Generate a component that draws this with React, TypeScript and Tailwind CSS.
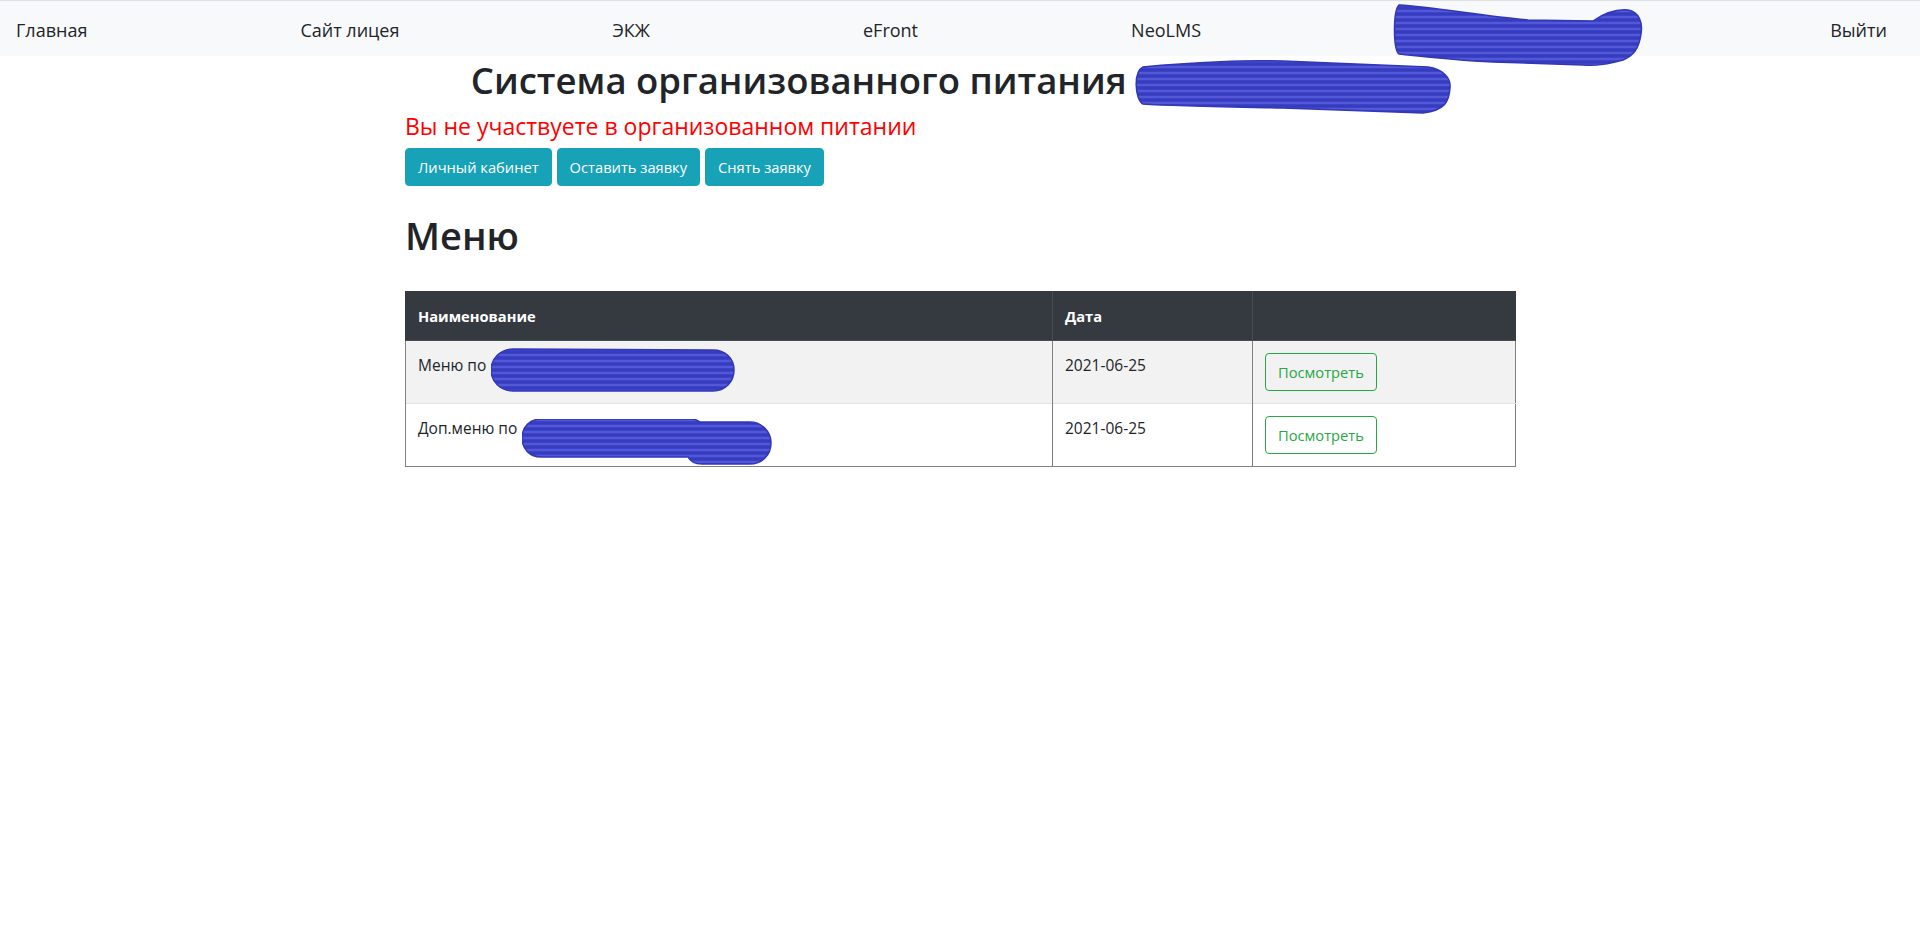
import React from "react";

function Texture({ id, w, h }: { id: string; w: number; h: number }) {
  const lines: React.ReactNode[] = [];
  for (let y = 1; y < h; y += 3) {
    lines.push(
      <path
        key={y}
        d={`M0,${y} Q${w * 0.25},${y + ((y * 7) % 3) - 1} ${w * 0.5},${y} T${w},${y}`}
        stroke={y % 2 ? "#7a82ee" : "#2b31a8"}
        strokeWidth={1}
        fill="none"
        opacity={0.7}
      />
    );
  }
  return <g clipPath={`url(#${id})`}>{lines}</g>;
}

function Scribble({ id, w, h, d, className }: { id: string; w: number; h: number; d: string; className: string }) {
  return (
    <svg width={w} height={h} viewBox={`0 0 ${w} ${h}`} className={className} aria-hidden="true">
      <defs>
        <clipPath id={id}>
          <path d={d} />
        </clipPath>
      </defs>
      <path d={d} fill="#3d43c9" />
      <Texture id={id} w={w} h={h} />
      <path d={d} fill="none" stroke="#3237b8" strokeWidth={1.5} />
    </svg>
  );
}

const navScribble =
  "M6,1 C40,3 90,12 135,16 L200,17 C210,10 222,5 235,6 C246,8 250,18 248,30 C246,45 240,52 230,56 C215,60 205,62 190,61 L100,58 C60,56 25,52 6,50 C0,45 0,7 6,1 Z";
const titleScribble =
  "M10,7 C60,2 120,0 150,1 L295,7 C310,9 318,18 317,28 C316,42 312,50 290,53 L150,48 C100,47 40,46 10,44 C2,40 0,12 10,7 Z";
const row1Scribble =
  "M22,1 L222,2 C234,2 243,10 243,22 C243,34 234,43 222,43 L22,43 C10,43 0,34 0,22 C0,10 10,1 22,1 Z";
const row2Scribble =
  "M19,0 L170,0 C174,0 176,2 178,3 L228,3 C240,3 249,13 249,24 C249,36 240,45 228,45 L180,45 C172,45 168,42 166,38 L19,38 C8,38 0,30 0,19 C0,8 8,0 19,0 Z";

const navItems = ["Главная", "Сайт лицея", "ЭКЖ", "eFront", "NeoLMS"];

const thBase = "px-3 py-3 text-left text-[14.7px] leading-6 font-bold border border-[#454d55] border-t-[#343a40]";
const tdBase = "px-3 py-3 align-top border-l border-[#808080] border-t border-t-[#dee2e6]";
const greenBtn =
  "h-[38px] px-3 border border-[#28a745] text-[#28a745] text-[14.7px] leading-6 rounded-[4px] bg-transparent";

export default function App() {
  return (
    <div className="min-h-[931px] bg-white text-[#212529] font-['Open_Sans',sans-serif]">
      <nav className="h-[56px] border-t border-[#dee2e6] bg-[#f8f9fa] flex items-center justify-between pl-4 pr-[33px] pt-[3px] text-[18px] text-[#212529]">
        {navItems.map((n) => (
          <a key={n} className="whitespace-nowrap">{n}</a>
        ))}
        <a className="relative w-[203px] whitespace-nowrap">
          <span className="text-[#f8f9fa]">Пользователь</span>
          <Scribble id="sc-nav" w={250} h={62} d={navScribble} className="absolute left-[-21px] top-[-13px] z-10" />
        </a>
        <a className="whitespace-nowrap">Выйти</a>
      </nav>

      <main className="w-[1110px] mx-auto">
        <h2 className="mt-[3px] text-center text-[36.5px] leading-[1.2] font-semibold whitespace-nowrap">
          Система организованного питания{" "}
          <span className="relative inline-block w-[313px] h-[44px] align-top">
            <Scribble id="sc-title" w={318} h={54} d={titleScribble} className="absolute left-[-3px] top-[1px]" />
          </span>
        </h2>
        <h5 className="mt-[10px] text-[23px] leading-[1.2] text-[#ff0000]">Вы не участвуете в организованном питании</h5>
        <div className="mt-[7px] flex gap-[5px]">
          {["Личный кабинет", "Оставить заявку", "Снять заявку"].map((b) => (
            <button
              key={b}
              className="h-[38px] px-3 border border-[#17a2b8] bg-[#17a2b8] text-white text-[14.7px] leading-6 rounded-[4px]"
            >
              {b}
            </button>
          ))}
        </div>

        <h1 className="mt-[27px] text-[38px] leading-[1.2] font-semibold">Меню</h1>

        <table className="mt-[33px] w-[1110px] table-fixed border-collapse border border-[#808080]">
          <colgroup>
            <col className="w-[647px]" />
            <col className="w-[200px]" />
            <col className="w-[263px]" />
          </colgroup>
          <thead>
            <tr className="bg-[#343a40] text-white">
              <th className={`${thBase} border-l-[#343a40]`}>Наименование</th>
              <th className={thBase}>Дата</th>
              <th className={`${thBase} border-r-[#343a40]`}></th>
            </tr>
          </thead>
          <tbody className="text-[15.5px] leading-6">
            <tr className="bg-[#f2f2f2]">
              <td className={tdBase}>
                Меню по{" "}
                <span className="relative inline-block w-[240px] h-6 align-top">
                  <Scribble id="sc-r1" w={244} h={44} d={row1Scribble} className="absolute left-[1px] top-[-5px]" />
                </span>
              </td>
              <td className={tdBase}>2021-06-25</td>
              <td className={tdBase}>
                <button className={greenBtn}>Посмотреть</button>
              </td>
            </tr>
            <tr className="bg-white">
              <td className={tdBase}>
                Доп.меню по{" "}
                <span className="relative inline-block w-[240px] h-6 align-top">
                  <Scribble id="sc-r2" w={250} h={46} d={row2Scribble} className="absolute left-[1px] top-[3px]" />
                </span>
              </td>
              <td className={tdBase}>2021-06-25</td>
              <td className={tdBase}>
                <button className={greenBtn}>Посмотреть</button>
              </td>
            </tr>
          </tbody>
        </table>
      </main>
    </div>
  );
}
